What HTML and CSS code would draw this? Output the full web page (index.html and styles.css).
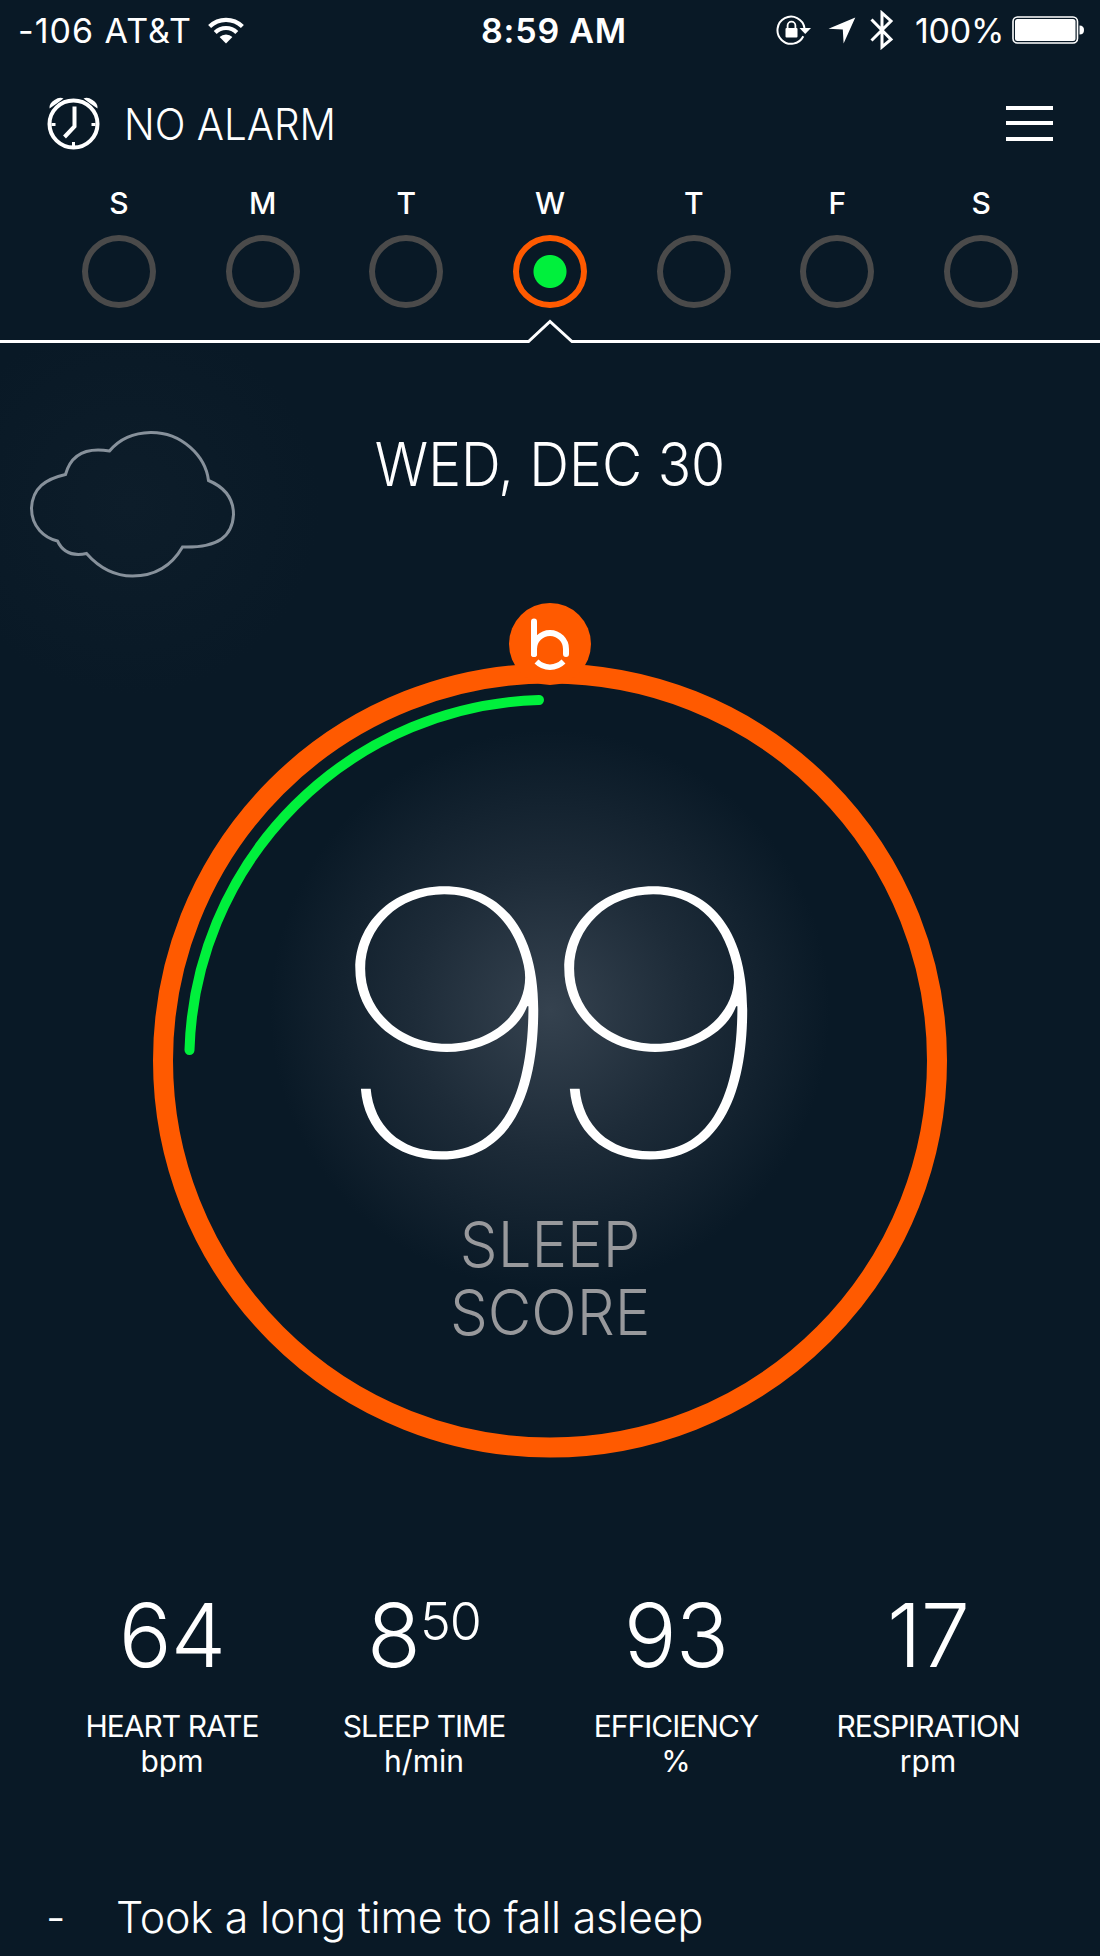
FILE: index.html
```html
<!DOCTYPE html>
<html lang="en">
<head>
    <meta charset="UTF-8">
    <meta name="viewport" content="width=device-width, initial-scale=1.0">
    <title>Sleep Score</title>
    <link rel="stylesheet" href="styles.css">
</head>
<body>
    <div class="status-bar">
        <div class="status-left">
            <span class="carrier">-106 AT&amp;T</span>
            <svg class="wifi" width="36" height="27" viewBox="0 0 36 27" fill="none" stroke="#fff" stroke-width="4.2">
                <path d="M1.6 9.6a23.5 23.5 0 0 1 32.8 0"/>
                <path d="M7.2 15.4a15.4 15.4 0 0 1 21.6 0"/>
                <path d="M18 26.500l-6.400-6.400a9 9 0 0 1 12.800 0z" fill="#fff" stroke="none"/>
            </svg>
        </div>
        <div class="clock-time">8:59 AM</div>
        <div class="status-right">
            <svg class="lock" width="36" height="32" viewBox="0 0 36 32">
                <path d="M27.3 22.2A13.6 13.6 0 1 1 28.5 14" fill="none" stroke="#fff" stroke-width="2"/>
                <path d="M23.5 14H35l-5.800 6z" fill="#fff"/>
                <rect x="9.5" y="14" width="12" height="9.5" rx="1" fill="#fff"/>
                <path d="M11.6 15v-3.4a3.9 3.9 0 0 1 7.8 0V15" fill="none" stroke="#fff" stroke-width="1.8"/>
            </svg>
            <svg class="arrow" width="28" height="27" viewBox="0 0 28 27">
                <path d="M27.3 0.5L15.6 26.5 14.8 12.4 0.5 11.8z" fill="#fff"/>
            </svg>
            <svg class="bluetooth" width="24" height="40" viewBox="0 0 24 40" fill="none" stroke="#fff" stroke-width="3">
                <path d="M1.5 9.5L21 29.5 12 37V3l9 8L1.5 30.5"/>
            </svg>
            <span class="percent">100%</span>
            <svg class="battery" width="73" height="28" viewBox="0 0 73 28">
                <rect x="1" y="1" width="64.500" height="26" rx="4.500" fill="none" stroke="#fff" stroke-width="1.6"/>
                <rect x="3" y="3" width="60.500" height="22" rx="2.500" fill="#fff"/>
                <path d="M67.500 9.500q4.500 0 4.500 4.500t-4.500 4.500z" fill="#fff"/>
            </svg>
        </div>
    </div>

    <div class="header">
        <svg class="alarm" width="54" height="54" viewBox="0 0 54 54" fill="none" stroke="#fff">
            <ellipse cx="26.500" cy="28" rx="24" ry="23.500" stroke-width="4"/>
            <path d="M27.500 10.500v20L17.500 41" stroke-width="4"/>
            <path d="M4.500 28.500h4M44.500 28.500h4M26.500 46v4" stroke-width="3"/>
            <path d="M2.500 12.500Q2 7 7.500 4q5-3.600 9-1.500L10.500 7z M50.500 12.500Q51 7 45.500 4q-5-3.600-9-1.500L42.500 7z" fill="#fff" stroke="none"/>
        </svg>
        <span class="alarm-text">NO ALARM</span>
        <div class="menu">
            <span></span>
            <span></span>
            <span></span>
        </div>
    </div>

    <div class="week">
        <div class="day">S<i></i></div>
        <div class="day">M<i></i></div>
        <div class="day">T<i></i></div>
        <div class="day active">W<i></i></div>
        <div class="day">T<i></i></div>
        <div class="day">F<i></i></div>
        <div class="day">S<i></i></div>
    </div>
    <svg class="divider" width="1100" height="26" viewBox="0 0 1100 26" fill="none" stroke="#fff" stroke-width="3">
        <path d="M0 22.500H528.500L550 2.500 572 22.500H1100"/>
    </svg>

    <div class="night">
        <div class="summary">
            <svg class="cloud" width="250" height="150" viewBox="0 0 250 150">
                <path d="M80 22Q95 4 121 3.500C152 3 176 27 179 51.500Q204 62 204 85.500C203 107 189 119 153 118C142 137 125 147 103 147Q77 147 57 124.500Q36 129 28 112C15 109 2 98 2 79C3 59 16 50 36 45.500Q44 16 80 22Z" transform="translate(29.500 1)" fill="none" stroke="#87919b" stroke-width="3"/>
            </svg>
            <h1 class="date">WED, DEC 30</h1>
        </div>

        <div class="score">
            <svg class="ring" width="800" height="860" viewBox="150 600 800 860" fill="none">
                <circle cx="550" cy="1060.500" r="387" stroke="#ff5a00" stroke-width="20"/>
                <circle cx="550" cy="644" r="41" fill="#ff5a00"/>
                <path d="M189.500 1050A360.500 360.500 0 0 1 539 700" stroke="#00f03c" stroke-width="10" stroke-linecap="round"/>
                <g stroke="#fff" stroke-width="6">
                    <path d="M534 621.500V654" stroke-linecap="round"/>
                    <path d="M534 654v-5a16 16 0 0 1 32 0v5" stroke-linecap="round"/>
                    <path d="M536.500 661.500a19 19 0 0 0 27 0" stroke-width="5.500"/>
                </g>
            </svg>
            <div class="score-text">
                <div class="score-value">99</div>
                <div class="score-label">SLEEP<br>SCORE</div>
            </div>
        </div>
    </div>

    <div class="metrics">
        <div class="metric">
            <div class="value">64</div>
            <div class="label">HEART RATE</div>
            <div class="unit">bpm</div>
        </div>
        <div class="metric">
            <div class="value">8<sup>50</sup></div>
            <div class="label">SLEEP TIME</div>
            <div class="unit">h/min</div>
        </div>
        <div class="metric">
            <div class="value">93</div>
            <div class="label">EFFICIENCY</div>
            <div class="unit">%</div>
        </div>
        <div class="metric">
            <div class="value">17</div>
            <div class="label">RESPIRATION</div>
            <div class="unit">rpm</div>
        </div>
    </div>

    <div class="note">
        <span class="dash">-</span>
        <span class="note-text">Took a long time to fall asleep</span>
    </div>
</body>
</html>
```
FILE: styles.css
```css
* {
    box-sizing: border-box;
}
body {
    margin: 0;
    width: 1100px;
    height: 1956px;
    overflow: hidden;
    background-color: #091926;
    color: #fff;
    font-family: Inter, "Liberation Sans", sans-serif;
    font-weight: 300;
}
svg {
    display: block;
    flex-shrink: 0;
}

/* status bar */
.status-bar {
    display: grid;
    grid-template-columns: 1fr auto 1fr;
    align-items: center;
    height: 60px;
    padding: 0 15px 0 18px;
    font-size: 34px;
    font-weight: 400;
}
.status-left,
.status-right {
    display: flex;
    align-items: center;
}
.status-right {
    justify-content: flex-end;
}
.carrier {
    letter-spacing: 1px;
}
.wifi {
    margin-left: 16px;
}
.clock-time {
    padding-left: 5px;
    font-weight: 600;
    letter-spacing: 0.8px;
}
.arrow {
    margin-left: 16px;
}
.bluetooth {
    margin: 0 21px 0 14px;
}
.percent {
    letter-spacing: -0.3px;
}
.battery {
    margin-left: 8px;
}

/* header */
.header {
    display: flex;
    align-items: center;
    height: 126px;
    padding: 0 47px;
}
.alarm-text {
    margin-left: 23px;
    padding-top: 1px;
    font-size: 43px;
    transform: scaleX(0.94);
    transform-origin: left;
}
.menu {
    display: flex;
    flex-direction: column;
    gap: 11.5px;
    width: 47px;
    margin-left: auto;
}
.menu span {
    height: 4px;
    background-color: #fff;
}

/* week */
.week {
    display: flex;
    height: 133px;
    padding: 0 47px;
}
.day {
    display: flex;
    flex: 1;
    flex-direction: column;
    align-items: center;
    font-size: 30px;
    font-weight: 500;
    line-height: 34px;
}
.day i {
    width: 74px;
    height: 73px;
    margin-top: 15px;
    border: 6px solid #4a4a4a;
    border-radius: 50%;
}
.day.active i {
    border-color: #ff5a00;
    background: radial-gradient(circle, #00f03c 16px, transparent 17px);
}
.divider {
    height: 26px;
}

/* cloud and score glow */
.night {
    background:
        radial-gradient(circle at 130px 160px, #0d1d2a, transparent 190px),
        radial-gradient(circle at 550px 665px, #35424f, #1d2b38 140px, transparent 280px);
}
.summary {
    display: grid;
    grid-template-columns: 300px 500px 300px;
    height: 255px;
    padding-top: 83px;
}
.date {
    margin: 0;
    font-size: 60px;
    font-weight: 300;
    line-height: 72px;
    text-align: center;
    transform: scaleX(0.92);
}

/* score */
.score {
    display: grid;
    justify-items: center;
    height: 860px;
}
.ring,
.score-text {
    grid-area: 1 / 1;
}
.score-text {
    padding-top: 240px;
    text-align: center;
}
.score-value {
    height: 370px;
    padding-left: 2px;
    font-size: 366px;
    font-weight: 100;
    letter-spacing: -31px;
    line-height: 366px;
    text-indent: -31px;
    transform: scaleX(1.19);
}
.score-label {
    color: #98999c;
    font-size: 63px;
    line-height: 68px;
    transform: scaleX(0.95);
}

/* metrics */
.metrics {
    display: grid;
    grid-template-columns: repeat(4, 252px);
    justify-content: center;
    height: 395px;
    padding-top: 121px;
    text-align: center;
}
.value {
    height: 127px;
    font-size: 88px;
    letter-spacing: -1px;
    line-height: 108px;
}
.value sup {
    font-size: 52px;
    vertical-align: 27px;
    line-height: 0;
}
.label,
.unit {
    height: 35px;
    font-size: 30px;
    font-weight: 400;
    line-height: 37px;
}
.label {
    letter-spacing: -1px;
}
.unit {
    height: 34px;
    overflow: hidden;
}

/* note */
.note {
    display: flex;
    padding: 35px 46px 0;
    font-size: 43px;
    letter-spacing: -0.2px;
    line-height: 54px;
}
.dash {
    width: 70px;
}
```
